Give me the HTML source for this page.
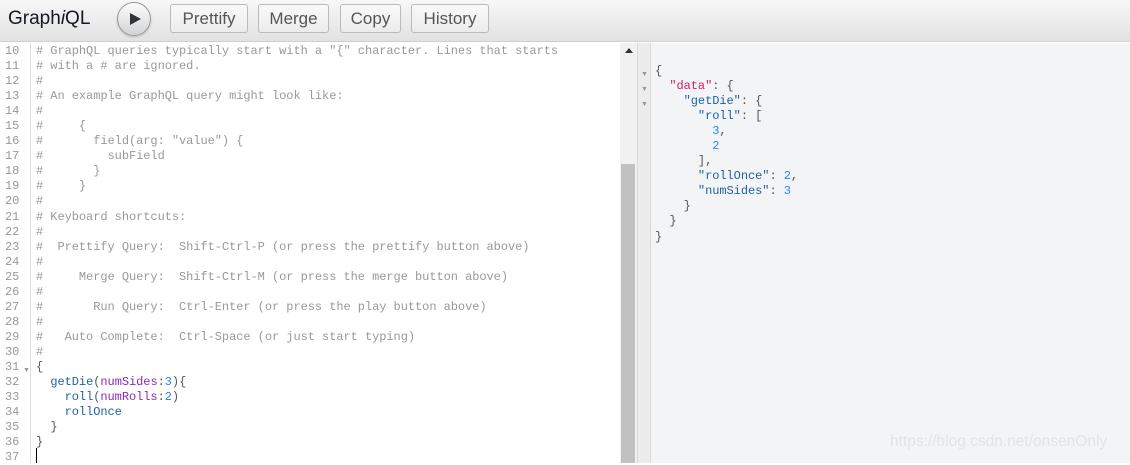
<!DOCTYPE html>
<html><head><meta charset="utf-8"><style>
*{margin:0;padding:0;box-sizing:border-box}
body{width:1130px;height:463px;overflow:hidden;background:#fff;font-family:"Liberation Sans",sans-serif;position:relative}
.tb{position:absolute;left:0;top:0;width:1130px;height:42px;background:linear-gradient(#f7f7f7,#e2e2e2);border-bottom:1px solid #d0d0d0}
.title{position:absolute;left:8px;top:8px;font-size:19px;color:#141823}
.play{position:absolute;left:117px;top:2px;width:34px;height:34px;border-radius:50%;border:1px solid #999;background:linear-gradient(#fdfdfd,#d2d3d6);box-shadow:0 1px 2px rgba(0,0,0,.2)}
.play:after{content:"";position:absolute;left:12px;top:10px;border-left:11px solid #333;border-top:6.5px solid transparent;border-bottom:6.5px solid transparent}
.btn{position:absolute;top:4px;height:29px;border:1px solid #bbb;border-radius:3px;background:linear-gradient(#f9f9f9,#ececec);font-size:17px;color:#555;text-align:center;line-height:27px}
.code{position:absolute;font-family:"Liberation Mono",monospace;font-size:12px;line-height:15.04px;white-space:pre;letter-spacing:-0.05px}
.ln{position:absolute;left:0;width:31px;top:43px;bottom:0;border-right:1px solid #ddd;background:#fff}
.c{color:#999}.p{color:#555}.f{color:#1f61a0}.a{color:#8b2bb9}.n{color:#2882f9}.k{color:#d01b6b}.s{color:#1f61a0}
</style></head><body>
<div class="tb">
<div class="title">Graph<i>i</i>QL</div>
<div class="play"></div>
<div class="btn" style="left:170px;width:78px">Prettify</div>
<div class="btn" style="left:258px;width:71px">Merge</div>
<div class="btn" style="left:340px;width:61px">Copy</div>
<div class="btn" style="left:411px;width:78px">History</div>
</div>
<div class="ln"></div>
<div class="code" style="left:5px;top:44px;color:#999">10
11
12
13
14
15
16
17
18
19
20
21
22
23
24
25
26
27
28
29
30
31
32
33
34
35
36
37</div>
<div style="position:absolute;left:23px;top:367px;font-size:7px;color:#999">▼</div>
<div class="code" style="left:36px;top:44px"><span class="c"># GraphQL queries typically start with a "{" character. Lines that starts
# with a # are ignored.
#
# An example GraphQL query might look like:
#
#     {
#       field(arg: "value") {
#         subField
#       }
#     }
#
# Keyboard shortcuts:
#
#  Prettify Query:  Shift-Ctrl-P (or press the prettify button above)
#
#     Merge Query:  Shift-Ctrl-M (or press the merge button above)
#
#       Run Query:  Ctrl-Enter (or press the play button above)
#
#   Auto Complete:  Ctrl-Space (or just start typing)
#</span>
<span class="p">{</span>
  <span class="f">getDie</span><span class="p">(</span><span class="a">numSides</span><span class="p">:</span><span class="n">3</span><span class="p">){</span>
    <span class="f">roll</span><span class="p">(</span><span class="a">numRolls</span><span class="p">:</span><span class="n">2</span><span class="p">)</span>
    <span class="f">rollOnce</span>
  <span class="p">}</span>
<span class="p">}</span></div>
<div style="position:absolute;left:36px;top:448px;width:1px;height:15px;background:#000"></div>
<div style="position:absolute;left:620px;top:43px;width:17px;height:420px;background:#f1f1f1"></div>
<div style="position:absolute;left:621px;top:164px;width:14px;height:299px;background:#c1c1c1"></div>
<div style="position:absolute;left:625px;top:48px;border-bottom:5px solid #333;border-left:4px solid transparent;border-right:4px solid transparent"></div>
<div style="position:absolute;left:637px;top:43px;width:14px;height:420px;background:#ececec;border-left:1px solid #d8d8d8;border-right:1px solid #d8d8d8"></div>
<div style="position:absolute;left:651px;top:43px;width:479px;height:420px;background:#f3f4f6"></div>
<div style="position:absolute;left:641px;top:67px;font-size:7px;line-height:15px;color:#999">▼<br>▼<br>▼</div>
<div class="code" style="left:655px;top:64px"><span class="p">{</span>
  <span class="k">"data"</span><span class="p">: {</span>
    <span class="s">"getDie"</span><span class="p">: {</span>
      <span class="s">"roll"</span><span class="p">: [</span>
        <span class="n">3</span><span class="p">,</span>
        <span class="n">2</span>
      <span class="p">],</span>
      <span class="s">"rollOnce"</span><span class="p">: </span><span class="n">2</span><span class="p">,</span>
      <span class="s">"numSides"</span><span class="p">: </span><span class="n">3</span>
    <span class="p">}</span>
  <span class="p">}</span>
<span class="p">}</span></div>
<div style="position:absolute;left:890px;top:433px;font-size:15.5px;color:#e2e3e5">https://blog.csdn.net/onsenOnly</div>
</body></html>
